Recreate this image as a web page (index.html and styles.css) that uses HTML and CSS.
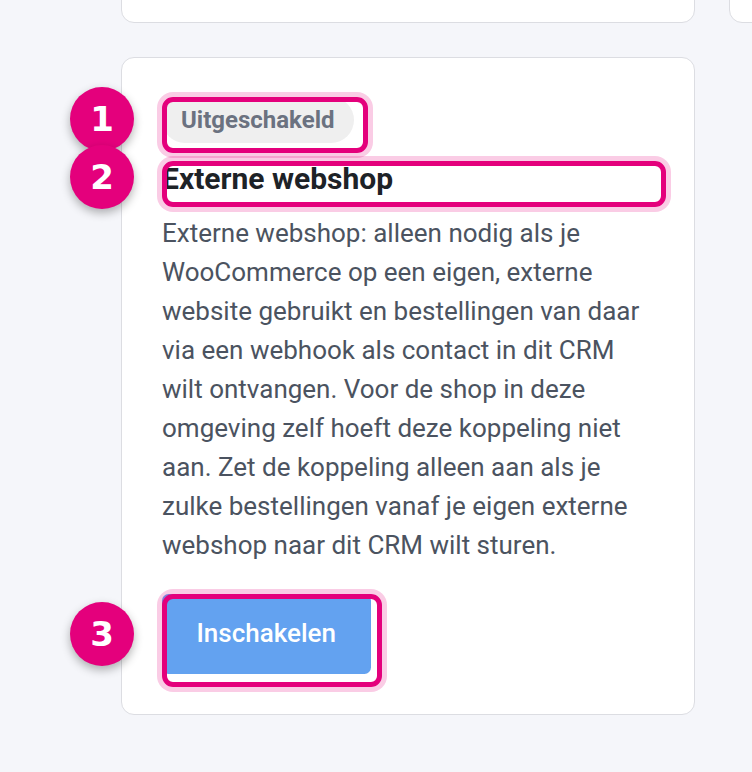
FILE: index.html
```html
<!DOCTYPE html>
<html lang="nl">
<head>
    <meta charset="UTF-8">
    <meta name="viewport" content="width=device-width, initial-scale=1.0">
    <title>Koppelingen</title>
    <link rel="stylesheet" href="styles.css">
</head>
<body>
    <div class="grid">
        <div class="card card-stub"></div>
        <div class="card card-stub"></div>

        <div class="card integration">
            <span class="badge">Uitgeschakeld</span>
            <h3 class="title">Externe webshop</h3>
            <p class="desc">Externe webshop: alleen nodig als je WooCommerce op een eigen, externe website gebruikt en bestellingen van daar via een webhook als contact in dit CRM wilt ontvangen. Voor de shop in deze omgeving zelf hoeft deze koppeling niet aan. Zet de koppeling alleen aan als je zulke bestellingen vanaf je eigen externe webshop naar dit CRM wilt sturen.</p>
            <button class="btn">Inschakelen</button>

            <!-- highlight rings + numbered markers -->
            <div class="mark mark-badge"></div>
            <div class="mark mark-title"></div>
            <div class="mark mark-btn"></div>
            <span class="step step-1">1</span>
            <span class="step step-2">2</span>
            <span class="step step-3">3</span>
        </div>
    </div>
</body>
</html>
```

FILE: styles.css
```css
* {
    margin: 0;
    padding: 0;
    box-sizing: border-box;
}

body {
    background: #f5f6fa;
    font-family: Roboto, 'Liberation Sans', sans-serif;
    height: 100vh;
    overflow: hidden;
}

.grid {
    display: grid;
    grid-template-columns: 574px 574px;
    column-gap: 34px;
    row-gap: 34px;
    padding-left: 121px;
    margin-top: -77px;
}

.card {
    background: #fff;
    border: 1.5px solid #dcdde2;
    border-radius: 13px;
}

.card-stub {
    height: 100px;
}

.integration {
    position: relative;
    display: flex;
    flex-direction: column;
    align-items: flex-start;
    padding: 39px 39px 40.5px 40px;
}

.badge {
    display: inline-block;
    margin-left: -0.5px;
    background: #efefef;
    color: #6b7280;
    font-size: 24px;
    font-weight: 700;
    line-height: 32.5px;
    padding: 6.5px 19.5px;
    border-radius: 999px;
}

.title {
    margin-top: 13px;
    font-size: 30px;
    font-weight: 700;
    line-height: 45.5px;
    color: #1d2227;
}

.desc {
    margin-top: 13px;
    font-size: 26px;
    line-height: 39px;
    color: #4b5360;
}

.btn {
    margin-top: 28.5px;
    background: #63a2f0;
    color: #fff;
    font-family: inherit;
    font-size: 26px;
    font-weight: 500;
    line-height: 39px;
    padding: 20.5px 34.5px;
    border: none;
    border-radius: 6.5px;
}

/* highlight rings */
.mark {
    position: absolute;
    border: 5.5px solid #e4007c;
    border-radius: 11px;
    box-shadow: 0 0 0 5px rgba(228, 0, 124, 0.2);
}

.mark-badge { left: 39.5px; top: 38.5px; width: 206px; height: 56px; }
.mark-title { left: 39.5px; top: 102.5px; width: 504px; height: 46px; }
.mark-btn   { left: 39.5px; top: 535.5px; width: 220px; height: 93px; }

.step {
    position: absolute;
    left: -52px;
    width: 64px;
    height: 64px;
    border-radius: 50%;
    background: #e4007c;
    color: #fff;
    font-family: 'DejaVu Sans', sans-serif;
    font-size: 34px;
    font-weight: 700;
    display: flex;
    justify-content: center;
    align-items: center;
    box-shadow: 0 4px 10px rgba(0, 0, 0, 0.3);
}

.step-1 { top: 28.5px; }
.step-2 { top: 86.5px; }
.step-3 { top: 543.5px; }
```
